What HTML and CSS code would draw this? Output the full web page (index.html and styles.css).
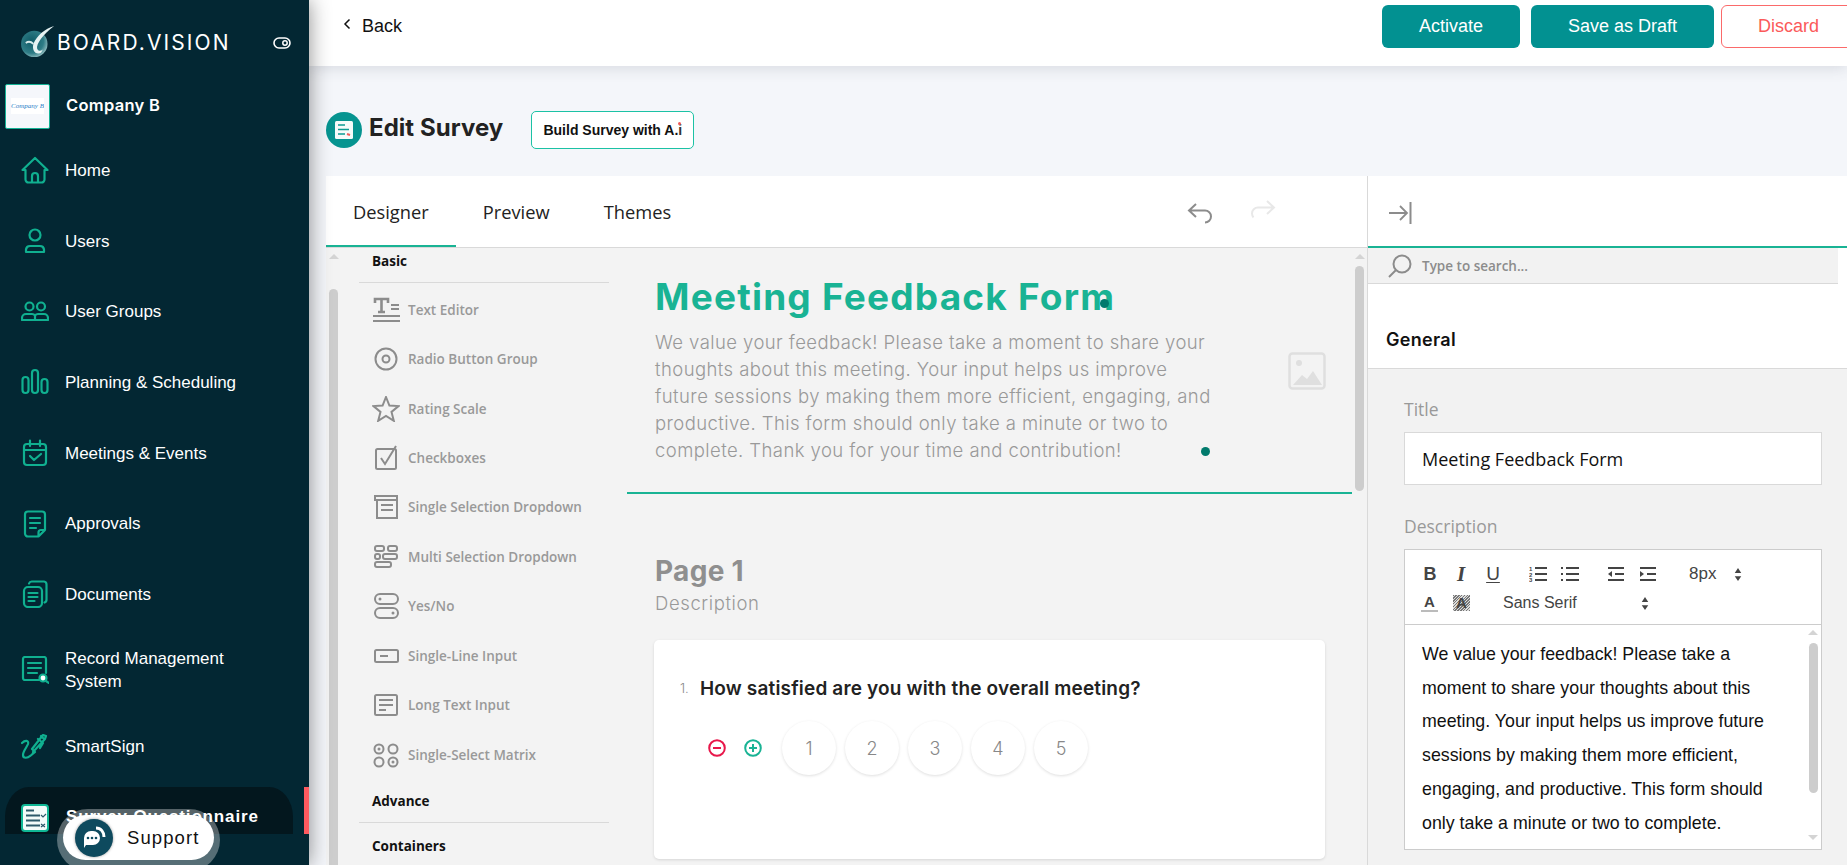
FILE: index.html
```html
<!DOCTYPE html>
<html lang="en">
<head>
<meta charset="utf-8">
<title>Edit Survey</title>
<link rel="stylesheet" href="styles.css">
</head>
<body>
<div class="app">
  <aside class="sidebar">
    <div class="brand">
      <svg class="logo" viewBox="0 0 40 36"><defs><radialGradient id="lg" cx=".4" cy=".4" r=".75"><stop offset="0" stop-color="#0f5a66"/><stop offset=".6" stop-color="#2e7c86"/><stop offset="1" stop-color="#c4dede"/></radialGradient></defs><circle cx="15" cy="20" r="14" fill="url(#lg)"/><path d="M36 1C26 4 18 11 14 20c-1 4 0 9 4 10 3 1 5-1 6-4-2 2-5 2-6-1-1-5 6-15 18-24z" fill="#e6f2f2"/><path d="M6 19c3-2 6-1 8 1" stroke="#d8eaea" stroke-width="2" fill="none"/></svg>
      <span class="brand-name">BOARD.VISION</span>
      <svg class="toggle" viewBox="0 0 18 12"><rect x="1" y="1" width="16" height="10" rx="5" fill="none" stroke="#fff" stroke-width="1.6"/><circle cx="12" cy="6" r="2.2" fill="none" stroke="#fff" stroke-width="1.5"/></svg>
    </div>
    <div class="company">
      <div class="company-logo"><span class="company-logo-text">Company B</span></div>
      <span class="company-name">Company B</span>
    </div>
    <nav class="nav">
      <a class="nav-item">
        <svg class="nav-icon" viewBox="0 0 28 28"><path d="M1.500 14 14 2l12.500 12h-3v9.500a3 3 0 0 1-3 3h-13a3 3 0 0 1-3-3V14zM11 26v-6a3 3 0 0 1 6 0v6"/></svg>
        <span>Home</span>
      </a>
      <a class="nav-item">
        <svg class="nav-icon" viewBox="0 0 28 28"><circle cx="14" cy="8" r="5.500"/><path d="M5 25v-2.500A4 4 0 0 1 9 19h10a4 4 0 0 1 4 3.500V25z"/></svg>
        <span>Users</span>
      </a>
      <a class="nav-item">
        <svg class="nav-icon" viewBox="0 0 28 28"><circle cx="8.500" cy="8.500" r="4"/><circle cx="20" cy="8.500" r="4"/><path d="M1 22v-2a4 4 0 0 1 4-4h6a4 4 0 0 1 3 1.500A4 4 0 0 1 17 16h6a4 4 0 0 1 4 4v2zM14 17.500V22"/></svg>
        <span>User Groups</span>
      </a>
      <a class="nav-item">
        <svg class="nav-icon" viewBox="0 0 28 28"><rect x="1.500" y="9" width="6" height="16" rx="3"/><rect x="11" y="2" width="6" height="23" rx="3"/><rect x="20.500" y="11" width="6" height="14" rx="3"/></svg>
        <span>Planning &amp; Scheduling</span>
      </a>
      <a class="nav-item">
        <svg class="nav-icon" viewBox="0 0 28 28"><rect x="3" y="5" width="22" height="21" rx="3"/><path d="M3 11h22M9 1.500V7M19 1.500V7M9 17l4 4 7-6"/></svg>
        <span>Meetings &amp; Events</span>
      </a>
      <a class="nav-item">
        <svg class="nav-icon" viewBox="0 0 28 28"><path d="M7 1.500h14a3 3 0 0 1 3 3V20l-6.500 6.500H7a3 3 0 0 1-3-3v-19a3 3 0 0 1 3-3zM9 8h10M9 13h10M9 18h6M24 20h-4a2.500 2.500 0 0 0-2.500 2.500v4"/></svg>
        <span>Approvals</span>
      </a>
      <a class="nav-item">
        <svg class="nav-icon" viewBox="0 0 28 28"><rect x="3" y="7" width="18" height="20" rx="4"/><path d="M8 3.500A3 3 0 0 1 11 1.500h12a3 3 0 0 1 2.500 3v15a3 3 0 0 1-2 3M7.500 13h9M7.500 17h9M7.500 21h6"/></svg>
        <span>Documents</span>
      </a>
      <a class="nav-item nav-item-tall">
        <svg class="nav-icon" viewBox="0 0 28 28"><path d="M18 24H4a2 2 0 0 1-2-2V3a2 2 0 0 1 2-2h19a2 2 0 0 1 2 2v14M7 7h13M7 12h13M7 17h9"/><circle class="fill-white" cx="22" cy="22" r="3.500"/><path d="m25 25 3 2"/></svg>
        <span class="nav-two-line">Record Management System</span>
      </a>
      <a class="nav-item nav-item-sign">
        <svg class="nav-icon" viewBox="0 0 28 28"><path d="M1 10c3-3 7-3 6 1-1 3-5 7-5 11 0 4 5 3 7 1 2-1 3-3 5-4l-3-3L22 2l3 1-1 3-12 13M17 6l5 4-3 5M20 3l3 3"/></svg>
        <span>SmartSign</span>
      </a>
      <a class="nav-active">
        <svg class="nav-icon-active" viewBox="0 0 28 28"><rect x="1" y="1" width="26" height="26" rx="3" fill="#f2fbf9" stroke="#10b795" stroke-width="2"/><path d="M5 6.500h8M5 11.500h14M5 16.500h14M5 21.500h14" stroke="#2c5a6a" stroke-width="2"/><path d="m20 11 2 2 3-3M20 20l4 3M24 20l-4 3" stroke="#2c5a6a" stroke-width="1.200" fill="none"/></svg>
        <span class="nav-active-text">Survey Questionnaire</span>
      </a>
      <span class="nav-marker"></span>
    </nav>
    <div class="support">
      <div class="support-inner">
        <span class="support-circle">
          <svg class="support-icon" viewBox="0 0 24 24"><path d="M2 12a7 7 0 0 1 7-7h2a7 7 0 0 1 7 7 7 7 0 0 1-7 7H4l-2 3z" fill="#fff"/><circle cx="6" cy="12" r="1.300" fill="#0e4a5e"/><circle cx="10" cy="12" r="1.300" fill="#0e4a5e"/><circle cx="14" cy="12" r="1.300" fill="#0e4a5e"/><path d="M14 2c5 0 8 4 8 9" fill="none" stroke="#fff" stroke-width="3"/></svg>
        </span>
        <span class="support-text">Support</span>
      </div>
    </div>
  </aside>

  <main class="main">
    <header class="topbar">
      <a class="back"><svg class="back-chevron" viewBox="0 0 8 12"><path d="M6.500 1.500 2 6l4.500 4.500"/></svg>Back</a>
      <div class="top-actions">
        <button class="btn btn-primary btn-activate">Activate</button>
        <button class="btn btn-primary btn-draft">Save as Draft</button>
        <button class="btn btn-discard">Discard</button>
      </div>
    </header>

    <div class="page-head">
      <span class="page-icon">
        <svg class="page-icon-svg" viewBox="0 0 20 20"><rect x="1" y="1" width="18" height="18" rx="1.500" fill="#f5fbfa"/><path d="M4 5h7M4 9.500h11M4 14h7" stroke="#0e9a92" stroke-width="1.500"/><path d="m13 14 3 1" stroke="#f05a5a" stroke-width="2"/></svg>
      </span>
      <h1 class="page-title">Edit Survey</h1>
      <button class="ai-btn">Build Survey with A.<span class="ai-i">i</span></button>
    </div>

    <section class="workspace">
      <div class="designer">
        <div class="tabs">
          <span class="tab tab-active">Designer</span>
          <span class="tab">Preview</span>
          <span class="tab">Themes</span>
          <span class="history">
            <svg class="hist-icon" viewBox="0 0 26 22"><path d="M9 2 2 8.500 9 15M2 8.500h16a6 6 0 0 1 6 6 6 6 0 0 1-6 6" stroke="#8c8c8c"/></svg>
            <svg class="hist-icon hist-redo" viewBox="0 0 26 22"><path d="m17 1 7 6.500-7 6.500M24 7.500H8a6 6 0 0 0-6 6 6 6 0 0 0 1.500 4" stroke="#e8e8e8"/></svg>
          </span>
        </div>
        <div class="designer-body">
          <div class="palette">
            <div class="vscroll vscroll-left">
              <span class="arrow-up"></span>
              <span class="thumb thumb-long"></span>
            </div>
            <div class="palette-list">
              <div class="pal-head pal-head-first">Basic</div>
              <div class="pal-item">
                <svg class="pal-icon" viewBox="0 0 28 26"><path d="M3 6V2h13v4M9.500 2v13M6 15h7" stroke-width="2.600"/><path d="M19 8h8M19 12h8M1 19h27M1 24h27"/></svg>
                <span>Text Editor</span>
              </div>
              <div class="pal-item">
                <svg class="pal-icon" viewBox="0 0 28 26"><circle cx="14" cy="13" r="10.500"/><circle cx="14" cy="13" r="3.500"/></svg>
                <span>Radio Button Group</span>
              </div>
              <div class="pal-item">
                <svg class="pal-icon" viewBox="0 0 28 26"><path d="m14 1 3.400 8.500 9.100.6-7 5.800 2.300 8.900L14 20l-7.800 4.800 2.300-8.900-7-5.800 9.100-.6z"/></svg>
                <span>Rating Scale</span>
              </div>
              <div class="pal-item">
                <svg class="pal-icon" viewBox="0 0 28 26"><rect x="4" y="4" width="20" height="20" rx="1.500"/><path d="m9 13 4 6 11-18"/></svg>
                <span>Checkboxes</span>
              </div>
              <div class="pal-item">
                <svg class="pal-icon" viewBox="0 0 28 26"><path d="M3 2h22v4H3zM5 6h20v18H5zM9 11h12M9 16h12"/></svg>
                <span>Single Selection Dropdown</span>
              </div>
              <div class="pal-item">
                <svg class="pal-icon" viewBox="0 0 28 26"><rect x="3" y="2" width="9" height="5" rx="2"/><rect x="16" y="2" width="9" height="5" rx="2"/><rect x="3" y="10" width="5" height="5" rx="2"/><rect x="11" y="10" width="14" height="5" rx="2"/><rect x="3" y="18" width="16" height="5" rx="2"/></svg>
                <span>Multi Selection Dropdown</span>
              </div>
              <div class="pal-item">
                <svg class="pal-icon" viewBox="0 0 28 26"><rect x="3" y="1" width="23" height="10" rx="5"/><rect x="3" y="15" width="23" height="10" rx="5"/><circle class="fill-grey" cx="8" cy="6" r="1.500"/><circle class="fill-grey" cx="21" cy="20" r="1.500"/></svg>
                <span>Yes/No</span>
              </div>
              <div class="pal-item">
                <svg class="pal-icon" viewBox="0 0 28 26"><rect x="3" y="7" width="23" height="12" rx="1.500"/><path d="M8 13h8"/></svg>
                <span>Single-Line Input</span>
              </div>
              <div class="pal-item">
                <svg class="pal-icon" viewBox="0 0 28 26"><rect x="3" y="3" width="22" height="20" rx="1.500"/><path d="M7 8h14M7 13h14M7 18h7"/></svg>
                <span>Long Text Input</span>
              </div>
              <div class="pal-item">
                <svg class="pal-icon" viewBox="0 0 28 26"><circle cx="7" cy="7" r="4.500"/><circle cx="21" cy="7" r="4.500"/><circle cx="7" cy="20" r="4.500"/><circle cx="21" cy="20" r="4.500"/><circle class="fill-grey" cx="7" cy="7" r="1.500"/><circle class="fill-grey" cx="21" cy="20" r="1.500"/></svg>
                <span>Single-Select Matrix</span>
              </div>
              <div class="pal-head pal-head-advance">Advance</div>
              <div class="pal-head pal-head-plain">Containers</div>
            </div>
          </div>
          <div class="canvas">
            <div class="canvas-main">
              <div class="form-head">
                <div class="form-head-text">
                  <h2 class="form-title">Meeting Feedback Form</h2>
                  <p class="form-desc">We value your feedback! Please take a moment to share your<br>thoughts about this meeting. Your input helps us improve<br>future sessions by making them more efficient, engaging, and<br>productive. This form should only take a minute or two to<br>complete. Thank you for your time and contribution!</p>
                </div>
                <svg class="img-icon" viewBox="0 0 38 38"><rect x="1.500" y="1.500" width="35" height="35" rx="3" fill="none" stroke="#dfdfdf" stroke-width="2.500"/><circle cx="11" cy="11" r="3" fill="#dfdfdf"/><path d="M5 33l9-10 5 4 6-8 9 14z" fill="#dfdfdf"/></svg>
                <span class="dot dot-title"></span>
                <span class="dot dot-desc"></span>
              </div>
              <div class="page-block">
                <h3 class="page-name">Page 1</h3>
                <p class="page-sub">Description</p>
                <div class="q-card">
                  <div class="q-line"><span class="q-num">1.</span><span class="q-text">How satisfied are you with the overall meeting?</span></div>
                  <div class="q-rating">
                    <svg class="q-op" viewBox="0 0 18 18"><circle cx="9" cy="9" r="7.800" fill="none" stroke="#e8174a" stroke-width="2"/><path d="M5 9h8" stroke="#e8174a" stroke-width="2"/></svg>
                    <svg class="q-op q-op-plus" viewBox="0 0 18 18"><circle cx="9" cy="9" r="7.800" fill="none" stroke="#19b394" stroke-width="2"/><path d="M5 9h8M9 5v8" stroke="#19b394" stroke-width="2"/></svg>
                    <span class="rate">1</span><span class="rate">2</span><span class="rate">3</span><span class="rate">4</span><span class="rate">5</span>
                  </div>
                </div>
              </div>
            </div>
            <div class="vscroll vscroll-canvas">
              <span class="arrow-up"></span>
              <span class="thumb thumb-canvas"></span>
            </div>
          </div>
        </div>
      </div>

      <aside class="props">
        <div class="props-top">
          <svg class="collapse-icon" viewBox="0 0 24 24"><path d="M1 12h18M12 5l7 7-7 7" fill="none" stroke="#8c8c8c" stroke-width="1.800"/><path d="M22.500 1v22" stroke="#8c8c8c" stroke-width="2"/></svg>
        </div>
        <div class="props-search">
          <svg class="search-icon" viewBox="0 0 24 24"><circle cx="14" cy="10" r="8.500" fill="none" stroke="#8c8c8c" stroke-width="2"/><path d="m8 16-7 7" stroke="#8c8c8c" stroke-width="2"/></svg>
          <span class="search-text">Type to search...</span>
        </div>
        <div class="props-general">General</div>
        <div class="props-body">
          <label class="field-label">Title</label>
          <div class="field-input">Meeting Feedback Form</div>
          <label class="field-label field-label-desc">Description</label>
          <div class="editor">
            <div class="editor-toolbar">
              <div class="tool-row">
                <span class="tool tool-b">B</span>
                <span class="tool tool-i">I</span>
                <span class="tool tool-u">U</span>
                <svg class="tool-svg tool-ol" viewBox="0 0 18 16"><path d="M6 2h12M6 8h12M6 14h12"/><text x="0" y="5" class="tool-mini">1</text><text x="0" y="10.500" class="tool-mini">2</text><text x="0" y="16" class="tool-mini">3</text></svg>
                <svg class="tool-svg tool-ul" viewBox="0 0 18 16"><path d="M5 2h13M5 8h13M5 14h13M0 2h2M0 8h2M0 14h2"/></svg>
                <svg class="tool-svg tool-out" viewBox="0 0 18 16"><path d="M1 2h16M8 8h9M1 14h16"/><path d="M5 5v6L1 8z" class="tool-fill"/></svg>
                <svg class="tool-svg tool-in" viewBox="0 0 18 16"><path d="M1 2h16M8 8h9M1 14h16"/><path d="M1 5v6l4-3z" class="tool-fill"/></svg>
                <span class="tool-select tool-size">8px</span>
                <svg class="updown updown-size" viewBox="0 0 6 12"><path d="M3 0 6 4.500H0zM3 12 0 7.500h6z"/></svg>
              </div>
              <div class="tool-row tool-row-2">
                <span class="tool-a">A</span>
                <span class="tool-bg">A</span>
                <span class="tool-select tool-font">Sans Serif</span>
                <svg class="updown updown-font" viewBox="0 0 6 12"><path d="M3 0 6 4.500H0zM3 12 0 7.500h6z"/></svg>
              </div>
            </div>
            <div class="editor-body">
              <div class="editor-text">We value your feedback! Please take a<br>moment to share your thoughts about this<br>meeting. Your input helps us improve future<br>sessions by making them more efficient,<br>engaging, and productive. This form should<br>only take a minute or two to complete.</div>
              <div class="vscroll vscroll-editor">
                <span class="arrow-up"></span>
                <span class="thumb thumb-editor"></span>
                <span class="arrow-down"></span>
              </div>
            </div>
          </div>
        </div>
      </aside>
    </section>
  </main>
</div>
</body>
</html>
```

FILE: styles.css
```css
* { box-sizing: border-box; }
html, body { margin: 0; padding: 0; height: 100%; overflow: hidden; }
body { font-family: "Liberation Sans", Arial, sans-serif; background: #f4f6fa; color: #111; }
h1, h2, h3, p { margin: 0; }
button { font-family: inherit; cursor: pointer; }

.app { display: flex; width: 1847px; height: 865px; overflow: hidden; }

/* Sidebar */
.sidebar { position: relative; z-index: 3; flex: 0 0 309px; background: #032733; box-shadow: 0 0 20px rgba(0,0,0,.45); color: #fff; }
.brand { display: flex; align-items: center; height: 83px; padding: 2px 18px 0 20px; }
.logo { width: 38px; height: 34px; margin-top: -2px; flex: none; }
.brand-name { margin-left: -1px; font-family: Inter, sans-serif; font-size: 21px; font-weight: 400; letter-spacing: 2.100px; }
.toggle { width: 18px; height: 12px; margin-left: auto; }
.company { display: flex; align-items: center; height: 46px; padding-left: 5px; }
.company-logo { display: flex; align-items: center; justify-content: center; width: 45px; height: 45px; background: #f5f7fb; border: 1px solid #13b295; border-radius: 2px; }
.company-logo-text { display: block; width: 33px; background: #fff; padding: 4px 0; font-family: "Liberation Serif", serif; font-style: italic; font-size: 7px; text-align: center; color: #2a7fc8; white-space: nowrap; overflow: hidden; }
.company-name { margin: -2px 0 0 16px; font-family: Inter, sans-serif; font-size: 16.500px; font-weight: 600; letter-spacing: .3px; }

.nav { position: relative; padding-top: 6px; }
.nav-item { display: flex; align-items: center; height: 70.700px; padding-left: 21px; font-size: 17px; line-height: 23px; }
.nav-item-tall { height: 80px; padding-left: 21px; }
.nav-item-sign { height: 74px; }
.nav-icon { flex: none; width: 28px; height: 28px; margin-right: 16px; fill: none; stroke: #10b090; stroke-width: 2.200; stroke-linecap: round; stroke-linejoin: round; }
.fill-white { fill: #fff; }
.nav-two-line { width: 170px; }
.nav-active { display: flex; align-items: flex-start; height: 47px; margin: 3px 16px 0 5px; padding: 17px 0 0 16px; background: #03171e; border-radius: 24px 24px 0 0 / 30px 30px 0 0; overflow: hidden; }
.nav-icon-active { flex: none; width: 28px; height: 28px; }
.nav-active-text { margin-left: 17px; margin-top: 3px; font-size: 17px; font-weight: 700; letter-spacing: .85px; white-space: nowrap; }
.nav-marker { position: absolute; right: 0; bottom: 0; width: 5px; height: 47px; background: #ff5a5f; }

.support { position: absolute; left: 57px; top: 809px; width: 163px; height: 62px; padding: 6px; background: rgba(255,255,255,.33); border-radius: 31px; }
.support-inner { display: flex; align-items: center; height: 45px; padding: 1px 0 0 12px; background: #fff; border-radius: 23px; }
.support-circle { display: flex; align-items: center; justify-content: center; width: 38px; height: 38px; margin-top: -1px; border-radius: 50%; background: #0e4a5e; box-shadow: 0 0 3px rgba(0,0,0,.4); }
.support-icon { width: 24px; height: 24px; }
.support-text { margin-left: 14px; font-size: 18.500px; letter-spacing: 1.100px; color: #111; }

/* Main column */
.main { flex: 1; min-width: 0; display: flex; flex-direction: column; }
.topbar { position: relative; z-index: 2; display: flex; align-items: flex-start; justify-content: space-between; flex: 0 0 66px; background: #fff; box-shadow: 0 2px 14px rgba(60,70,90,.16); }
.back { display: flex; align-items: center; height: 52px; padding-left: 34px; font-size: 18px; color: #111; }
.back-chevron { width: 8px; height: 12px; margin-right: 11px; margin-top: -4px; fill: none; stroke: #111; stroke-width: 1.500; }
.top-actions { display: flex; padding-top: 5px; margin-right: -9px; }
.btn { height: 43px; font-size: 18px; border-radius: 6px; border: 0; }
.btn-primary { background: #029191; color: #fff; }
.btn-activate { width: 138px; }
.btn-draft { width: 183px; margin-left: 11px; }
.btn-discard { width: 135px; margin-left: 7px; background: #fff; border: 1px solid #fb6a6a; color: #fb5a5a; }

.page-head { display: flex; align-items: center; flex: 0 0 110px; padding: 18px 0 0 17px; }
.page-icon { display: flex; align-items: center; justify-content: center; width: 36px; height: 36px; border-radius: 50%; background: #069490; }
.page-icon-svg { width: 20px; height: 20px; }
.page-title { margin: -5px 0 0 7px; font-family: Inter, sans-serif; font-size: 24px; font-weight: 700; color: #222; letter-spacing: .05px; }
.ai-btn { width: 163px; height: 38px; margin-left: 28px; background: #fff; border: 1.500px solid #1cc2a5; border-radius: 5px; font-size: 14px; font-weight: 700; color: #111; padding: 0; }
.ai-i { position: relative; color: #333; }
.ai-i::before { content: ""; position: absolute; left: 0; top: 0; width: 3px; height: 3px; background: #f05a5a; border-radius: 50%; }

.workspace { display: flex; flex: 1; min-height: 0; margin-left: 17px; background: #fff; }

/* Designer */
.designer { flex: 0 0 1041px; display: flex; flex-direction: column; min-width: 0; }
.tabs { display: flex; align-items: stretch; flex: 0 0 71px; background: #fff; border-bottom: 1.500px solid #d9d9d9; }
.tab { display: flex; align-items: center; height: 71px; padding: 1px 27px 0; font-family: "Open Sans", sans-serif; font-size: 18.300px; color: #222; border-bottom: 2.500px solid transparent; }
.tab-active { border-bottom-color: #19b394; }
.history { display: flex; align-items: center; margin-left: auto; padding: 2px 91px 0 0; }
.hist-icon { width: 26px; height: 22px; fill: none; stroke-width: 2; }
.hist-redo { margin-left: 37px; margin-top: -3px; }

.designer-body { display: flex; flex: 1; min-height: 0; background: #f3f3f3; }
.palette { display: flex; flex: 0 0 301px; }
.vscroll { display: flex; flex-direction: column; align-items: center; }
.vscroll-left { flex: 0 0 15px; padding-top: 6px; }
.arrow-up { width: 0; height: 0; border-left: 5px solid transparent; border-right: 5px solid transparent; border-bottom: 5px solid #d4d4d4; }
.arrow-down { width: 0; height: 0; margin-top: 9px; border-left: 5px solid transparent; border-right: 5px solid transparent; border-top: 5px solid #d4d4d4; }
.thumb { display: block; width: 9px; border-radius: 5px; background: #cdcdcd; }
.thumb-long { flex: 1; margin-top: 30px; border-radius: 5px 5px 0 0; }
.palette-list { flex: 1; padding-left: 18px; padding-right: 18px; overflow: hidden; }
.pal-head { display: flex; align-items: center; height: 41px; padding-left: 13px; font-family: "Open Sans", sans-serif; font-size: 13.500px; font-weight: 700; color: #111; border-bottom: 1.500px solid #d9d9d9; }
.pal-head-first { height: 35px; margin-bottom: 2px; padding-bottom: 8px; }
.pal-head-advance { height: 43.500px; }
.pal-head-plain { height: 46px; border-bottom: 0; }
.pal-item { display: flex; align-items: center; height: 49.450px; padding-left: 13px; font-family: "Open Sans", sans-serif; font-size: 13.500px; font-weight: 600; color: #999; }
.pal-icon { flex: none; width: 28px; height: 26px; margin-right: 8px; fill: none; stroke: #8c8c8c; stroke-width: 2; }
.fill-grey { fill: #8c8c8c; stroke: none; }

.canvas { display: flex; flex: 1; min-width: 0; }
.canvas-main { flex: 0 0 725px; min-width: 0; }
.form-head { position: relative; display: flex; align-items: flex-start; height: 246px; padding: 27px 26px 0 28px; border-bottom: 2.500px solid #19b394; }
.form-title { font-family: Inter, sans-serif; font-size: 37px; font-weight: 700; line-height: 44px; color: #19b394; letter-spacing: 1.200px; white-space: nowrap; }
.form-desc { margin-top: 10px; font-family: Inter, sans-serif; font-size: 18.500px; font-weight: 300; line-height: 27px; color: #999; letter-spacing: .42px; white-space: nowrap; }
.img-icon { flex: none; width: 38px; height: 38px; margin-left: auto; margin-top: 77px; }
.dot { position: absolute; width: 9px; height: 9px; border-radius: 50%; background: #017a6c; }
.dot-title { left: 473px; top: 51px; }
.dot-desc { left: 574px; top: 199px; }

.page-block { padding: 0 27px 0 28px; }
.page-name { margin-top: 61px; font-family: Inter, sans-serif; font-size: 28px; font-weight: 700; line-height: 32px; color: #8f8f8f; letter-spacing: .3px; }
.page-sub { margin-top: 4px; font-family: Inter, sans-serif; font-size: 18.500px; font-weight: 300; line-height: 24px; color: #999; letter-spacing: .6px; }
.q-card { height: 219px; margin: 25px 0 0 -1px; padding: 36px 0 0 26px; background: #fff; border-radius: 5px; box-shadow: 0 1px 3px rgba(0,0,0,.12); }
.q-line { display: flex; align-items: center; height: 24px; }
.q-num { width: 20px; font-family: Inter, sans-serif; font-size: 13px; font-weight: 300; color: #888; }
.q-text { font-family: Inter, sans-serif; font-size: 19px; font-weight: 600; color: #222; white-space: nowrap; letter-spacing: .17px; }
.q-rating { display: flex; align-items: center; margin-top: 21px; padding-left: 28px; }
.q-op { flex: none; width: 18px; height: 18px; }
.q-op-plus { margin-left: 18px; margin-right: 20px; }
.rate { display: flex; align-items: center; justify-content: center; width: 54px; height: 54px; margin-right: 9px; border-radius: 50%; background: #fff; box-shadow: 0 1px 3px rgba(0,0,0,.13); font-family: Inter, sans-serif; font-size: 18px; font-weight: 300; color: #888; }
.vscroll-canvas { flex: 1; padding-top: 6px; }
.thumb-canvas { height: 225px; margin-top: 7px; }

/* Properties panel */
.props { flex: 1; min-width: 0; display: flex; flex-direction: column; border-left: 1.500px solid #d9d9d9; }
.props-top { display: flex; align-items: center; flex: 0 0 72px; padding: 3px 0 0 20px; background: #fff; border-bottom: 2.500px solid #19b394; }
.collapse-icon { width: 24px; height: 24px; }
.props-search { display: flex; align-items: center; flex: 0 0 36px; margin-right: 9px; padding-left: 20px; background: #f2f2f2; border-bottom: 1.500px solid #d9d9d9; }
.search-icon { width: 24px; height: 24px; }
.search-text { margin-left: 10px; font-family: "Open Sans", sans-serif; font-size: 13.500px; font-weight: 600; color: #8c8c8c; }
.props-general { display: flex; align-items: center; flex: 0 0 85px; padding: 26px 0 0 18px; font-family: Inter, sans-serif; font-size: 18px; font-weight: 600; letter-spacing: .3px; color: #111; background: #fff; border-bottom: 1.500px solid #d9d9d9; }
.props-body { flex: 1; min-height: 0; padding: 27px 25px 0 36px; background: #f2f2f2; }
.field-label { display: block; height: 27px; font-family: "Open Sans", sans-serif; font-size: 17.500px; line-height: 27px; color: #999; }
.field-input { display: flex; align-items: center; height: 53px; margin-top: 9px; padding-left: 17px; background: #fff; border: 1.500px solid #d9d9d9; font-family: "Open Sans", sans-serif; font-size: 18px; color: #111; }
.field-label-desc { margin-top: 28px; }
.editor { height: 301px; margin-top: 9px; background: #fff; border: 1px solid #ccc; display: flex; flex-direction: column; }
.editor-toolbar { flex: 0 0 75px; padding: 13px 0 0 0; border-bottom: 1px solid #ccc; }
.tool-row { position: relative; display: flex; align-items: center; height: 22px; color: #444; }
.tool-row-2 { margin-top: 7px; }
.tool { width: 16px; font-size: 18px; text-align: center; color: #444; }
.tool-b { margin-left: 17px; font-weight: 700; }
.tool-i { margin-left: 15px; font-style: italic; font-weight: 700; font-family: "Liberation Serif", serif; font-size: 21px; }
.tool-u { margin-left: 16px; font-size: 19px; text-decoration: underline; text-underline-offset: 2px; }
.tool-svg { flex: none; width: 18px; height: 16px; fill: none; stroke: #444; stroke-width: 2; }
.tool-mini { font-size: 6px; fill: #444; stroke: none; font-weight: 700; }
.tool-fill { fill: #444; stroke: none; }
.tool-ol { margin-left: 28px; }
.tool-ul { margin-left: 14px; }
.tool-out { margin-left: 28px; }
.tool-in { margin-left: 14px; }
.tool-select { font-size: 16px; color: #444; }
.tool-size { margin-left: 32px; font-size: 17px; }
.updown { flex: none; width: 8px; height: 13px; fill: #444; }
.updown-size { margin-left: 18px; }
.tool-a { margin-left: 16px; width: 17px; font-size: 15px; font-weight: 700; text-align: center; border-bottom: 2px solid #bbb; line-height: 16px; color: #444; }
.tool-bg { margin-left: 15px; width: 17px; font-size: 15px; font-weight: 700; text-align: center; line-height: 16px; color: #444; background: repeating-linear-gradient(135deg, #777 0 1px, #ddd 1px 2px); }
.tool-font { margin-left: 33px; }
.updown-font { margin-left: 64px; }
.editor-body { display: flex; flex: 1; min-height: 0; }
.editor-text { flex: 1; padding: 13px 0 0 17px; font-size: 17.800px; line-height: 33.700px; color: #111; white-space: nowrap; }
.vscroll-editor { flex: 0 0 16px; padding-top: 5px; }
.thumb-editor { height: 150px; margin-top: 8px; }
.vscroll-editor .arrow-down { margin-top: 42px; }
```
